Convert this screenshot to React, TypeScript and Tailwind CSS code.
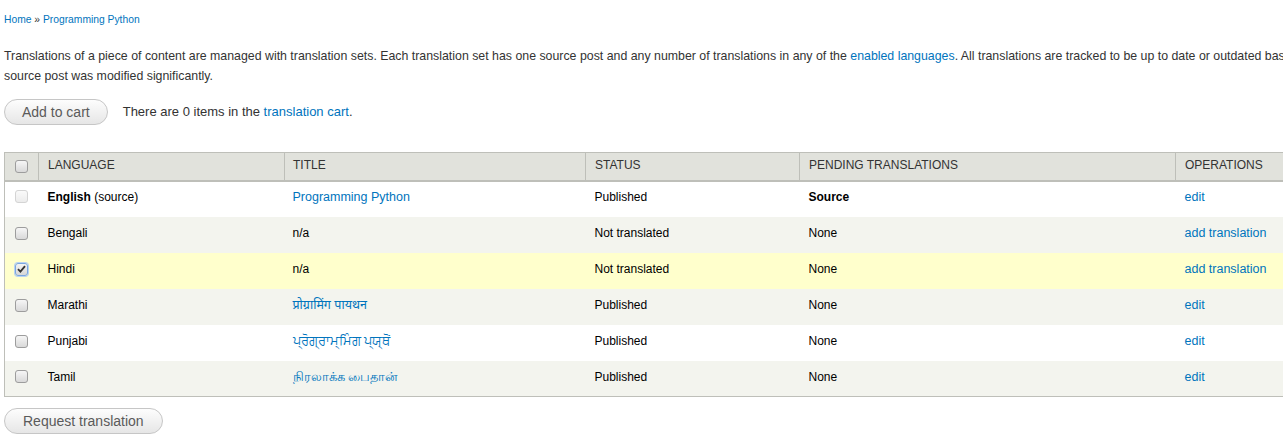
import React from "react";

const font = { fontFamily: '"Liberation Sans", Arial, "Noto Sans", sans-serif' };

function Box({ checked, disabled }: { checked?: boolean; disabled?: boolean }) {
  if (checked) {
    return (
      <span className="inline-flex h-[13px] w-[13px] items-center justify-center rounded-[3px] border border-[#7aa7e0] bg-gradient-to-b from-[#f4f4f4] to-[#d6d6d6] shadow-[0_0_0_1px_#b9d2f2]">
        <svg width="9" height="8" viewBox="0 0 9 8">
          <path d="M1 4.2 L3.4 6.6 L8 1.2" stroke="#333" strokeWidth="1.8" fill="none" />
        </svg>
      </span>
    );
  }
  return (
    <span
      className={
        disabled
          ? "inline-block h-[13px] w-[13px] rounded-[3px] border border-[#d4d4d4] bg-gradient-to-b from-[#fafafa] to-[#ececec]"
          : "inline-block h-[13px] w-[13px] rounded-[3px] border border-[#9d9d9d] bg-gradient-to-b from-[#f6f6f6] to-[#d9d9d9]"
      }
    />
  );
}

type Row = {
  lang: React.ReactNode;
  title: string;
  titleLink: boolean;
  status: string;
  pending: React.ReactNode;
  op: string;
  bg: string;
  checked?: boolean;
  disabled?: boolean;
};

const rows: Row[] = [
  {
    lang: (
      <>
        <b>English</b> (source)
      </>
    ),
    title: "Programming Python",
    titleLink: true,
    status: "Published",
    pending: <b>Source</b>,
    op: "edit",
    bg: "bg-white",
    disabled: true,
  },
  { lang: "Bengali", title: "n/a", titleLink: false, status: "Not translated", pending: "None", op: "add translation", bg: "bg-[#f3f4ee]" },
  { lang: "Hindi", title: "n/a", titleLink: false, status: "Not translated", pending: "None", op: "add translation", bg: "bg-[#ffffcc]", checked: true },
  { lang: "Marathi", title: "प्रोग्रामिंग पायथन", titleLink: true, status: "Published", pending: "None", op: "edit", bg: "bg-[#f3f4ee]" },
  { lang: "Punjabi", title: "ਪ੍ਰੋਗ੍ਰਾਮ੍ਮਿੰਗ ਪ੍ਯ੍ਥੋਂ", titleLink: true, status: "Published", pending: "None", op: "edit", bg: "bg-white" },
  { lang: "Tamil", title: "நிரலாக்க பைதான்", titleLink: true, status: "Published", pending: "None", op: "edit", bg: "bg-[#f3f4ee]" },
];

const btn =
  "rounded-full border border-[#c6c6c6] bg-gradient-to-b from-[#fdfdfd] to-[#e6e6e6] text-[14px] text-[#5a5a5a] leading-none h-[26px]";

export default function App() {
  return (
    <div className="h-[446px] w-[1283px] overflow-hidden bg-white" style={font}>
      <div className="w-[1400px] pl-[4px] text-[13px] leading-[20px] text-[#333]">
        <div className="pt-[10px] text-[10.3px] leading-[20px] text-[#333]">
          <a className="text-[#0074bd]">Home</a> » <a className="text-[#0074bd]">Programming Python</a>
        </div>
        <p className="mt-[16px] w-[1395px] text-[12.35px] leading-[20px]">
          Translations of a piece of content are managed with translation sets. Each translation set has one source post and
          any number of translations in any of the <a className="text-[#0074bd]">enabled languages</a>. All translations are
          tracked to be up to date or outdated based on whether the source post was modified significantly.
        </p>
        <div className="mt-[13px] flex items-center">
          <button className={`${btn} px-[17px]`}>Add to cart</button>
          <span className="ml-[15px] text-[13px]">
            There are 0 items in the <a className="text-[#0074bd]">translation cart</a>.
          </span>
        </div>
        <table className="mt-[27px] border-collapse border border-[#bebfb9] text-[12px] text-black">
          <thead>
            <tr className="h-[28px] bg-[#e1e2dc] text-[#333]">
              <th className="w-[34px] border-b-2 border-r border-[#bebfb9] text-center align-middle">
                <span className="flex justify-center">
                  <Box />
                </span>
              </th>
              <th className="w-[246px] border-b-2 border-r border-[#bebfb9] pb-[2px] pl-[9px] text-left font-normal">LANGUAGE</th>
              <th className="w-[301px] border-b-2 border-r border-[#bebfb9] pb-[2px] pl-[8px] text-left font-normal">TITLE</th>
              <th className="w-[214px] border-b-2 border-r border-[#bebfb9] pb-[2px] pl-[9px] text-left font-normal">STATUS</th>
              <th className="w-[376px] border-b-2 border-r border-[#bebfb9] pb-[2px] pl-[9px] text-left font-normal">PENDING TRANSLATIONS</th>
              <th className="w-[130px] border-b-2 border-[#bebfb9] pb-[2px] pl-[9px] text-left font-normal">OPERATIONS</th>
            </tr>
          </thead>
          <tbody>
            {rows.map((r, i) => {
              const pb = i === 0 ? "pb-[5px]" : "pb-[3px]";
              return (
                <tr key={i} className={`h-[36px] ${r.bg}`}>
                  <td className={`${pb} text-center align-middle`}>
                    <span className="flex justify-center">
                      <Box checked={r.checked} disabled={r.disabled} />
                    </span>
                  </td>
                  <td className={`${pb} pl-[9px]`}>{r.lang}</td>
                  <td className={`${pb} pl-[8px]`}>
                    {r.titleLink ? <a className="text-[12.5px] text-[#0074bd]">{r.title}</a> : r.title}
                  </td>
                  <td className={`${pb} pl-[9px]`}>{r.status}</td>
                  <td className={`${pb} pl-[9px]`}>{r.pending}</td>
                  <td className={`${pb} pl-[9px]`}>
                    <a className="text-[12.5px] text-[#0074bd]">{r.op}</a>
                  </td>
                </tr>
              );
            })}
          </tbody>
        </table>
        <div className="mt-[11px]">
          <button className={`${btn} px-[18px]`}>Request translation</button>
        </div>
      </div>
    </div>
  );
}
